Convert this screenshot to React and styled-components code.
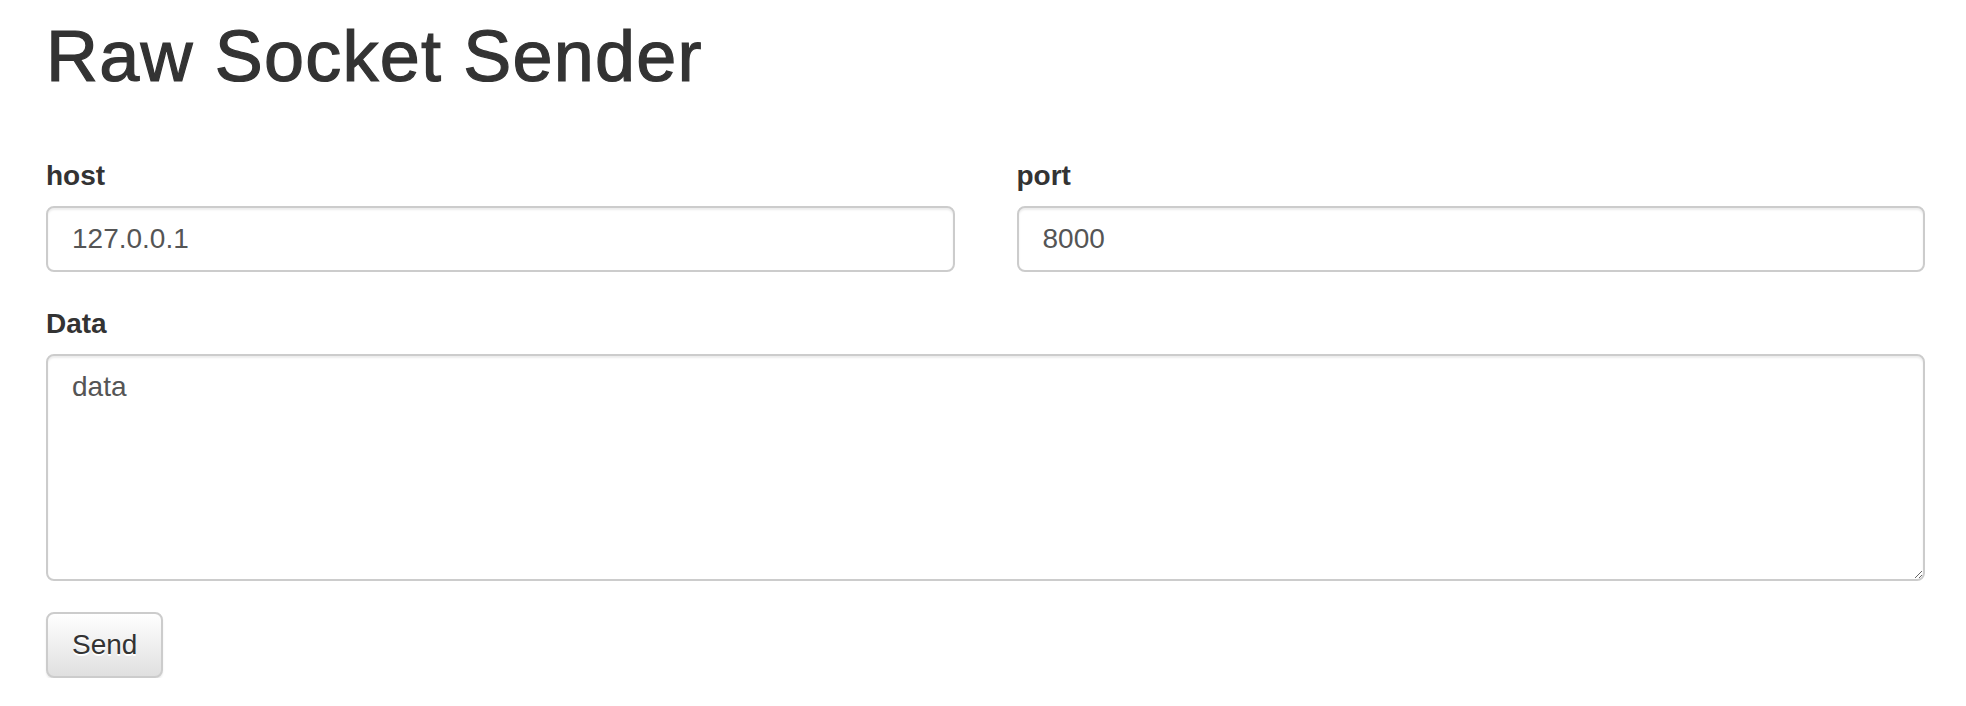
import React from "react";
import styled, { createGlobalStyle } from "styled-components";

const Global = createGlobalStyle`
  html, body { margin: 0; padding: 0; background: #fff; }
  body {
    font-family: "Liberation Sans", Arial, Helvetica, sans-serif;
    color: #333;
  }
  * { box-sizing: border-box; }
`;

const Page = styled.div`
  padding: 17px 41px 0 46px;
`;

const Title = styled.h1`
  margin: 0 0 60px;
  font-size: 72px;
  line-height: 79px;
  font-weight: 500;
  letter-spacing: 1.2px;
  -webkit-text-stroke: 1.2px #333;
  color: #333;
`;

const Form = styled.form`
  display: flex;
  flex-direction: column;
`;

const Row = styled.div`
  display: grid;
  grid-template-columns: 1fr 1fr;
  column-gap: 62px;
  margin-bottom: 32px;
`;

const Group = styled.div`
  display: flex;
  flex-direction: column;
  margin-bottom: ${(p) => p.$mb || 0}px;
`;

const Label = styled.label`
  display: block;
  font-size: 28px;
  line-height: 40px;
  font-weight: 700;
  color: #333;
  margin-bottom: 10px;
`;

const fieldBase = `
  width: 100%;
  font-family: "Liberation Sans", Arial, Helvetica, sans-serif;
  font-size: 28px;
  line-height: 40px;
  color: #555;
  background: #fff;
  border: 2px solid #ccc;
  border-radius: 8px;
  box-shadow: inset 0 2px 2px rgba(0, 0, 0, 0.075);
  padding: 11px 24px;
  outline: none;
  margin: 0;
`;

const Input = styled.input`
  ${fieldBase}
  height: 66px;
`;

const TextArea = styled.textarea`
  ${fieldBase}
  height: 227px;
  resize: vertical;
  display: block;
`;

const Button = styled.button`
  align-self: flex-start;
  font-family: "Liberation Sans", Arial, Helvetica, sans-serif;
  font-size: 28px;
  line-height: 40px;
  color: #333;
  padding: 11px 24px;
  height: 66px;
  border: 2px solid #ccc;
  border-radius: 8px;
  background-image: linear-gradient(to bottom, #fff 0%, #e0e0e0 100%);
  text-shadow: 0 2px 0 #fff;
  box-shadow: inset 0 2px 0 rgba(255, 255, 255, 0.15), 0 2px 2px rgba(0, 0, 0, 0.075);
  cursor: pointer;
`;

export default function App() {
  return (
    <>
      <Global />
      <Page>
        <Title>Raw Socket Sender</Title>
        <Form onSubmit={(e) => e.preventDefault()}>
          <Row>
            <Group>
              <Label htmlFor="host">host</Label>
              <Input id="host" type="text" defaultValue="127.0.0.1" />
            </Group>
            <Group>
              <Label htmlFor="port">port</Label>
              <Input id="port" type="text" defaultValue="8000" />
            </Group>
          </Row>
          <Group $mb={31}>
            <Label htmlFor="data">Data</Label>
            <TextArea id="data" rows={5} defaultValue="data" />
          </Group>
          <Button type="submit">Send</Button>
        </Form>
      </Page>
    </>
  );
}
